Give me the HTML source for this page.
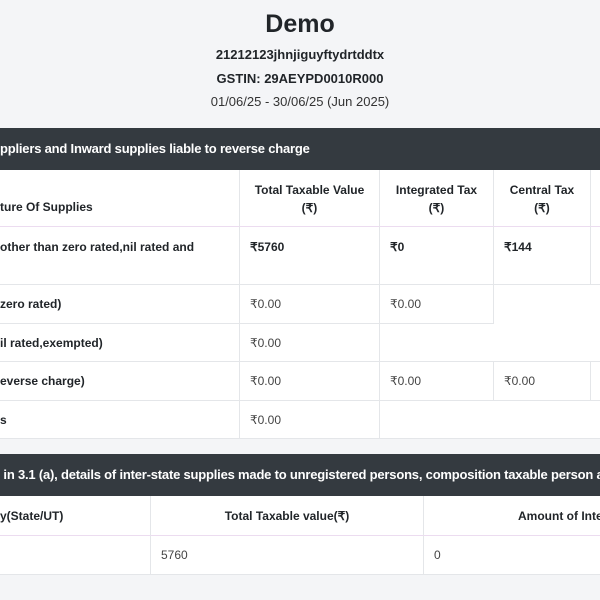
<!DOCTYPE html>
<html><head><meta charset="utf-8"><style>
body{margin:0;width:600px;height:600px;background:#f4f5f7;font-family:"Liberation Sans",sans-serif;color:#212529;position:relative;overflow:hidden}
.c{position:absolute;text-align:center;left:0;width:600px}
.bar{position:absolute;left:0;width:600px;height:42px;background:#343a40;color:#fff;font-weight:bold;font-size:13px;line-height:42px;white-space:nowrap;letter-spacing:-0.2px}
.w{position:absolute;background:#fff}
.cell{position:absolute;border-right:1px solid #e4e6e9;border-bottom:1px solid #e4e6e9;box-sizing:border-box;font-size:12px;padding:0 10px;white-space:nowrap;overflow:hidden;background:#fff}
.b{font-weight:bold}
.h{text-align:center;font-weight:bold;line-height:18px;padding-top:11px}
</style></head><body>
<div class="c" style="top:10px;font-size:25px;font-weight:bold">Demo</div>
<div class="c" style="top:47px;font-size:13px;font-weight:bold">21212123jhnjiguyftydrtddtx</div>
<div class="c" style="top:71px;font-size:13px;font-weight:bold">GSTIN: 29AEYPD0010R000</div>
<div class="c" style="top:94px;font-size:13px;color:#333">01/06/25 - 30/06/25 (Jun 2025)</div>

<div class="bar" style="top:128px;padding-left:0">ppliers and Inward supplies liable to reverse charge</div>

<div class="w" style="top:170px;left:0;width:600px;height:268px"></div>
<div class="cell b" style="top:170px;left:0;width:240px;height:57px;line-height:75px;padding:0;border-bottom-color:#ecdcf0">ture Of Supplies</div>
<div class="cell h" style="top:170px;left:240px;width:140px;height:57px;border-bottom-color:#ecdcf0">Total Taxable Value<br>(₹)</div>
<div class="cell h" style="top:170px;left:380px;width:114px;height:57px;border-bottom-color:#ecdcf0">Integrated Tax<br>(₹)</div>
<div class="cell h" style="top:170px;left:494px;width:97px;height:57px;border-bottom-color:#ecdcf0">Central Tax<br>(₹)</div>
<div class="cell" style="top:170px;left:591px;width:20px;height:57px;border-bottom-color:#ecdcf0"></div>
<div class="cell b" style="top:227px;left:0;width:240px;height:58px;line-height:40px;padding:0">other than zero rated,nil rated and</div>
<div class="cell b" style="top:227px;left:240px;width:140px;height:58px;line-height:40px">₹5760</div>
<div class="cell b" style="top:227px;left:380px;width:114px;height:58px;line-height:40px">₹0</div>
<div class="cell b" style="top:227px;left:494px;width:97px;height:58px;line-height:40px">₹144</div>
<div class="cell" style="top:227px;left:591px;width:20px;height:58px"></div>
<div class="cell b" style="top:285px;left:0;width:240px;height:39px;line-height:39px;padding:0">zero rated)</div>
<div class="cell" style="top:285px;left:240px;width:140px;height:39px;line-height:39px;color:#444">₹0.00</div>
<div class="cell" style="top:285px;left:380px;width:114px;height:39px;line-height:39px;color:#444">₹0.00</div>
<div class="cell b" style="top:324px;left:0;width:240px;height:38px;line-height:38px;padding:0">il rated,exempted)</div>
<div class="cell" style="top:324px;left:240px;width:140px;height:38px;line-height:38px;color:#444">₹0.00</div>
<div class="cell" style="top:324px;left:380px;width:220px;height:38px;border-right:none"></div>
<div class="cell b" style="top:362px;left:0;width:240px;height:39px;line-height:39px;padding:0">everse charge)</div>
<div class="cell" style="top:362px;left:240px;width:140px;height:39px;line-height:39px;color:#444">₹0.00</div>
<div class="cell" style="top:362px;left:380px;width:114px;height:39px;line-height:39px;color:#444">₹0.00</div>
<div class="cell" style="top:362px;left:494px;width:97px;height:39px;line-height:39px;color:#444">₹0.00</div>
<div class="cell" style="top:362px;left:591px;width:20px;height:39px"></div>
<div class="cell b" style="top:401px;left:0;width:240px;height:38px;line-height:38px;padding:0">s</div>
<div class="cell" style="top:401px;left:240px;width:140px;height:38px;line-height:38px;color:#444">₹0.00</div>
<div class="cell" style="top:401px;left:380px;width:220px;height:38px;border-right:none"></div>

<div class="bar" style="top:454px">&nbsp;in 3.1 (a), details of inter-state supplies made to unregistered persons, composition taxable person a</div>

<div class="cell b" style="top:496px;left:0;width:151px;height:40px;line-height:40px;padding:0;border-bottom-color:#ecdcf0">y(State/UT)</div>
<div class="cell b" style="top:496px;left:151px;width:273px;height:40px;line-height:40px;text-align:center;border-bottom-color:#ecdcf0">Total Taxable value(₹)</div>
<div class="cell b" style="top:496px;left:424px;width:200px;height:40px;line-height:40px;padding-left:94px;border-bottom-color:#ecdcf0">Amount of Integ</div>
<div class="cell" style="top:536px;left:0;width:151px;height:39px"></div>
<div class="cell" style="top:536px;left:151px;width:273px;height:39px;line-height:39px;color:#444">5760</div>
<div class="cell" style="top:536px;left:424px;width:200px;height:39px;line-height:39px;color:#444">0</div>
</body></html>
